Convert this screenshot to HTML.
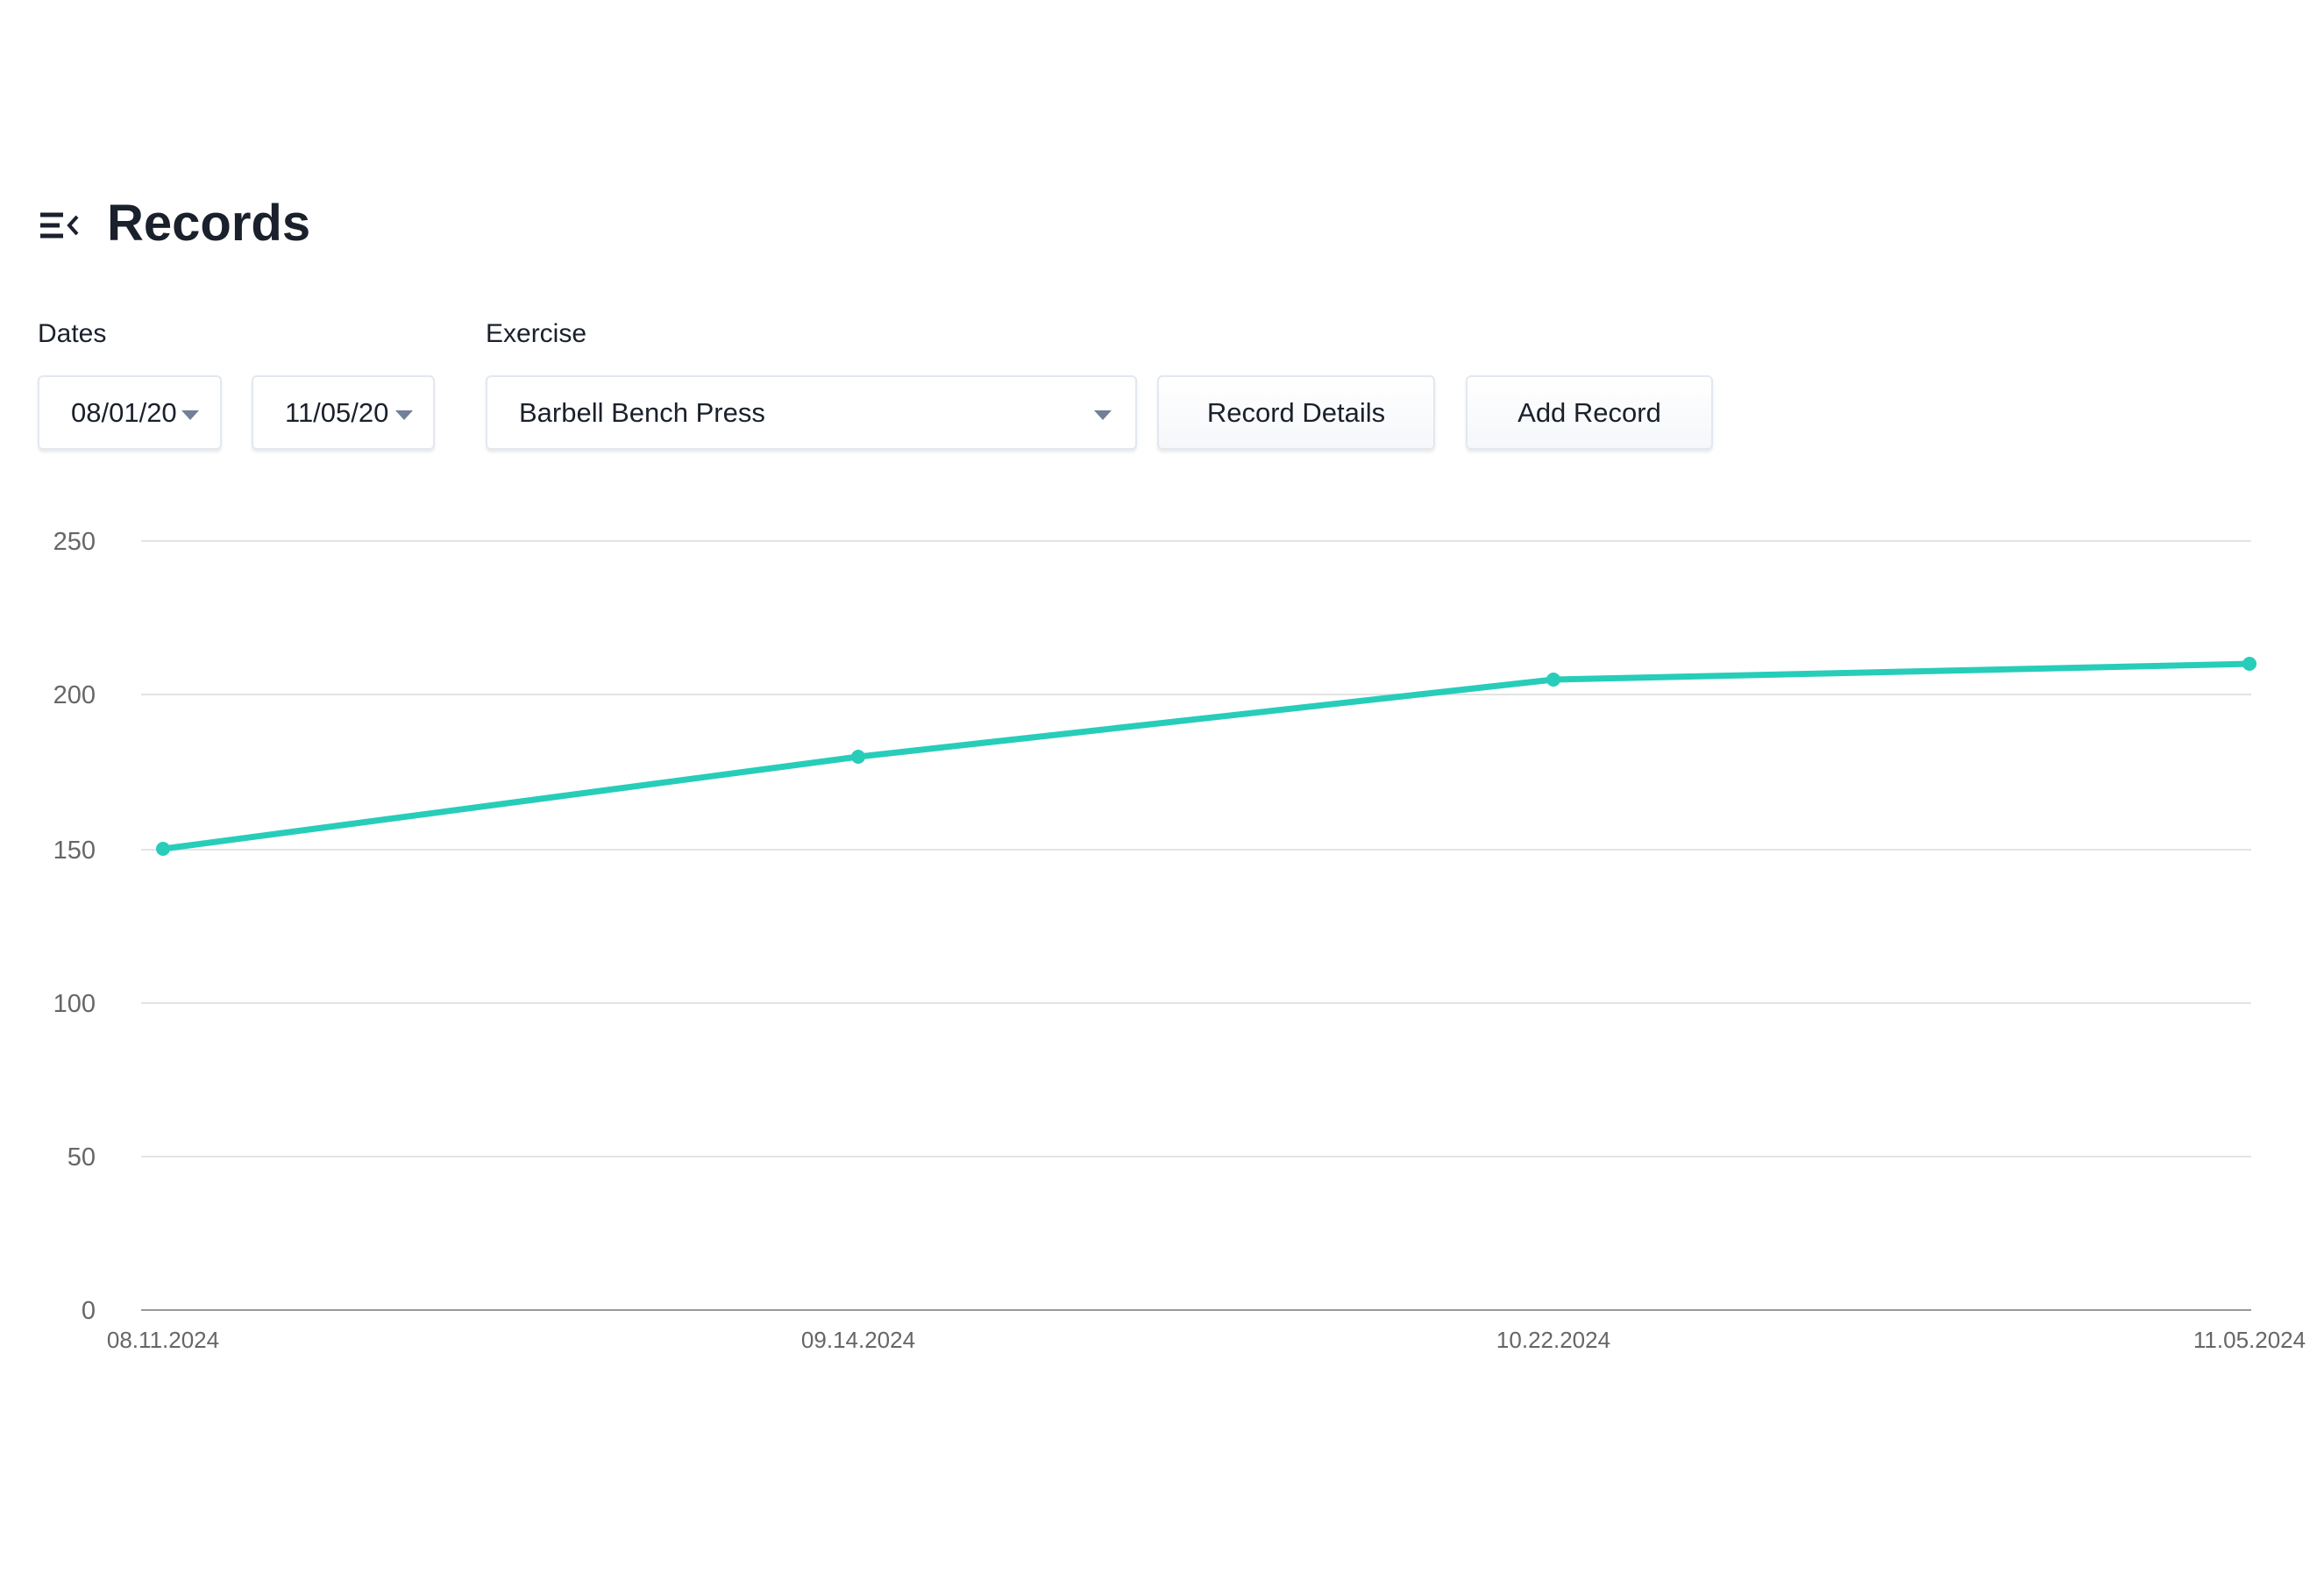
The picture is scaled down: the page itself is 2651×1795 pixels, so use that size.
<!DOCTYPE html>
<html><head><style>
body{margin:0;width:2651px;height:1795px;background:#fff;position:relative;overflow:hidden;font-family:"Liberation Sans",sans-serif;color:#1a202c}
.a{position:absolute}
.box{position:absolute;top:428px;height:85px;box-sizing:border-box;border:2px solid #e2e8f0;border-radius:6px;box-shadow:0 3px 3px rgba(0,0,0,.08);background:#fff;font-size:31px;display:flex;align-items:center;overflow:hidden;white-space:nowrap}
.btn{justify-content:center;background:linear-gradient(#fff,#f5f7fa)}
.tri{position:absolute;width:0;height:0;border-left:10px solid transparent;border-right:10px solid transparent;border-top:11px solid #718096}
</style></head><body>
<svg class="a" style="left:46px;top:241px" width="46" height="32" viewBox="0 0 46 32"><g stroke="#1a202c" stroke-width="5" fill="none"><path d="M0 4H26M0 16H22M0 28H26"/><path d="M42 6L33 16L42 26" stroke-width="4"/></g></svg>
<div class="a" style="left:122px;top:218px;font-size:58px;font-weight:bold;line-height:74px">Records</div>
<div class="a" style="left:43px;top:364px;font-size:30px">Dates</div>
<div class="a" style="left:554px;top:364px;font-size:30px">Exercise</div>
<div class="box" style="left:43px;width:210px;padding-left:36px">08/01/20<div class="tri" style="left:162px;top:38px"></div></div>
<div class="box" style="left:287px;width:209px;padding-left:36px">11/05/20<div class="tri" style="left:162px;top:38px"></div></div>
<div class="box" style="left:554px;width:743px;padding-left:36px">Barbell Bench Press<div class="tri" style="left:692px;top:38px"></div></div>
<div class="box btn" style="left:1320px;width:317px">Record Details</div>
<div class="box btn" style="left:1672px;width:282px">Add Record</div>
<svg class="a" style="left:0;top:0" width="2651" height="1795">
<g stroke="#e3e3e3" stroke-width="2">
<path d="M161 617H2568M161 792H2568M161 969H2568M161 1144H2568M161 1319H2568"/></g>
<path d="M161 1494H2568" stroke="#999" stroke-width="2"/>
<g font-family="Liberation Sans" font-size="29" fill="#666" text-anchor="end">
<text x="109" y="627">250</text><text x="109" y="802">200</text><text x="109" y="979">150</text><text x="109" y="1154">100</text><text x="109" y="1329">50</text><text x="109" y="1504">0</text></g>
<g font-family="Liberation Sans" font-size="26" fill="#666" text-anchor="middle">
<text x="186" y="1537">08.11.2024</text><text x="979" y="1537">09.14.2024</text><text x="1772" y="1537">10.22.2024</text><text x="2566" y="1537">11.05.2024</text></g>
<polyline points="186,968 979,863 1772,775 2566,757" fill="none" stroke="#27cdb9" stroke-width="7" stroke-linejoin="round"/>
<g fill="#27cdb9"><circle cx="186" cy="968" r="8"/><circle cx="979" cy="863" r="8"/><circle cx="1772" cy="775" r="8"/><circle cx="2566" cy="757" r="8"/></g>
</svg>
</body></html>
